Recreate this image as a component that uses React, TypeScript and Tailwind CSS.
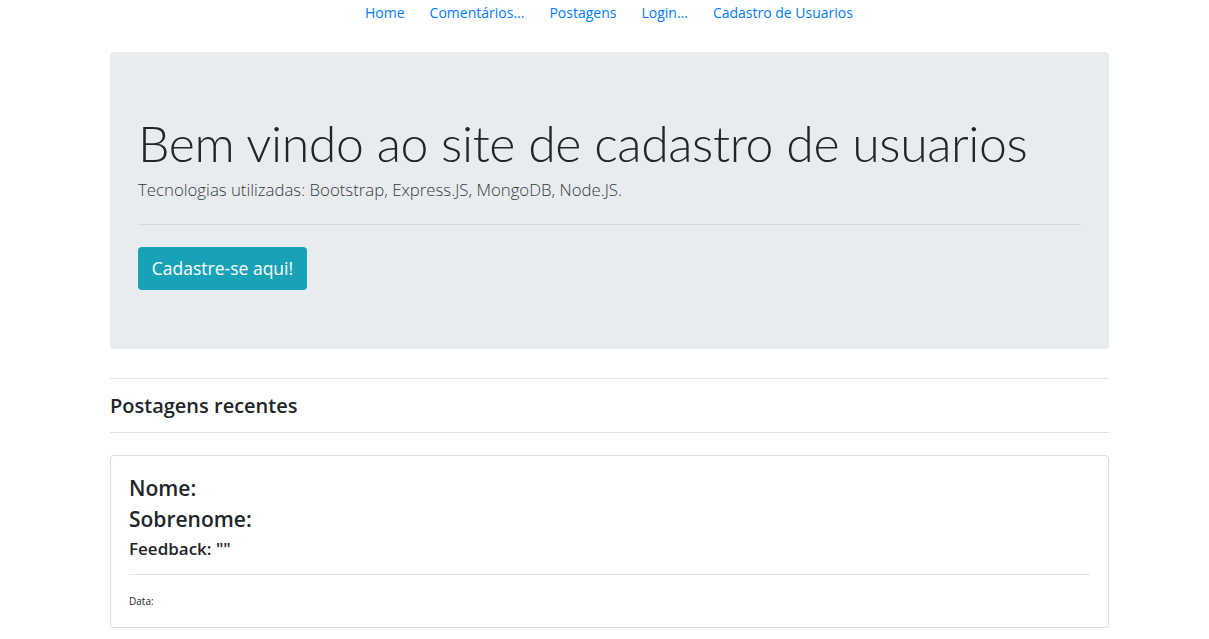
export default function App() {
  const links = ["Home", "Comentários...", "Postagens", "Login...", "Cadastro de Usuarios"];

  return (
    <div className="min-h-screen bg-white text-[#212529]" style={{ fontFamily: '"Open Sans", "Noto Sans", sans-serif' }}>
      {/* Top nav */}
      <nav className="flex justify-center gap-[25px] pt-[4px] pl-[9px] h-[52px]">
        {links.map((l) => (
          <a key={l} className="text-[14px] leading-[18px] text-[#007bff]">
            {l}
          </a>
        ))}
      </nav>

      <div className="ml-[110px] w-[999px]">
        {/* Jumbotron */}
        <div className="bg-[#e9ecef] rounded-[4px] h-[297px] px-[28px] pt-[60px]">
          <h1
            className="text-[50px] leading-[62px] font-light tracking-[-0.4px] whitespace-nowrap"
            style={{ fontFamily: 'Lato, "Open Sans", sans-serif' }}
          >
            Bem vindo ao site de cadastro de usuarios
          </h1>
          <p className="mt-[4px] text-[16.8px] leading-[24px] font-light text-[#343a40] whitespace-nowrap">
            Tecnologias utilizadas: Bootstrap, Express.JS, MongoDB, Node.JS.
          </p>
          <hr className="mt-[22px] border-t border-[#d4d8dc]" />
          <button className="mt-[22px] bg-[#17a2b8] text-white text-[17.5px] leading-[27px] py-[8px] rounded-[4px] w-[169px] whitespace-nowrap">
            Cadastre-se aqui!
          </button>
        </div>

        {/* Recent posts */}
        <div className="mt-[29px] border-t border-[#dee2e6]">
          <h2 className="text-[20px] leading-[28px] font-semibold pt-[13px] pb-[12px]">Postagens recentes</h2>
        </div>
        <div className="border-t border-[#dee2e6]" />

        <div className="mt-[22px] border border-[#dcdcdc] rounded-[4px] h-[173px] px-[18px] pt-[16px]">
          <h4 className="text-[21px] leading-[32px] font-semibold">Nome:</h4>
          <h4 className="text-[21px] leading-[31px] font-semibold">Sobrenome:</h4>
          <h5 className="text-[17px] leading-[28px] font-semibold">Feedback: ""</h5>
          <hr className="mt-[11px] border-t border-[#e2e2e2]" />
          <p className="mt-[19px] text-[10px] leading-[14px]">Data:</p>
        </div>
      </div>
    </div>
  );
}
